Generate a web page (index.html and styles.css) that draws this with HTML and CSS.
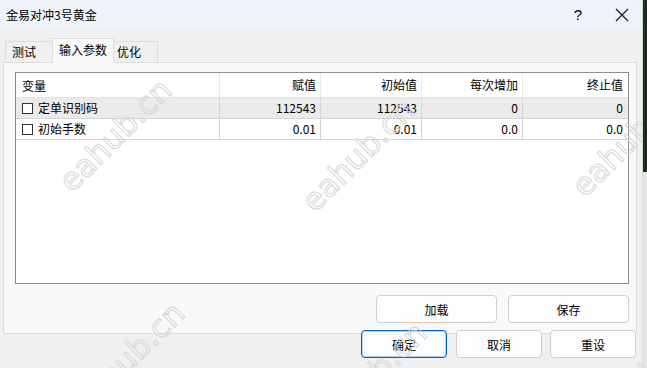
FILE: index.html
```html
<!DOCTYPE html>
<html lang="zh-CN">
<head>
    <meta charset="UTF-8">
    <title>金易对冲3号黄金</title>
    <link rel="stylesheet" href="styles.css">
</head>
<body>
    <div class="window">
        <div class="title-bar">
            <span class="title">金易对冲3号黄金</span>
            <span class="title-help">?</span>
            <span class="title-close">
                <svg width="14" height="14" viewBox="0 0 14 14"><path d="M1 1 L13 13 M13 1 L1 13" stroke="#1a1a1a" stroke-width="1.2" fill="none"/></svg>
            </span>
        </div>

        <div class="tabs">
            <div class="tab tab-test">测试</div>
            <div class="tab tab-active">输入参数</div>
            <div class="tab tab-opt">优化</div>
        </div>

        <div class="panel">
            <div class="list-view">
                <div class="list-row list-head">
                    <div class="cell cell-name">变量</div>
                    <div class="cell">赋值</div>
                    <div class="cell">初始值</div>
                    <div class="cell">每次增加</div>
                    <div class="cell cell-last">终止值</div>
                </div>
                <div class="list-row list-item selected">
                    <div class="cell cell-name"><span class="check"></span>定单识别码</div>
                    <div class="cell">112543</div>
                    <div class="cell">112543</div>
                    <div class="cell">0</div>
                    <div class="cell cell-last">0</div>
                </div>
                <div class="list-row list-item">
                    <div class="cell cell-name"><span class="check"></span>初始手数</div>
                    <div class="cell">0.01</div>
                    <div class="cell">0.01</div>
                    <div class="cell">0.0</div>
                    <div class="cell cell-last">0.0</div>
                </div>
            </div>
            <div class="panel-buttons">
                <button class="btn btn-wide">加载</button>
                <button class="btn btn-wide">保存</button>
            </div>
        </div>

        <div class="dialog-buttons">
            <button class="btn btn-default">确定</button>
            <button class="btn">取消</button>
            <button class="btn">重设</button>
        </div>

        <span class="wm" style="left:115px;top:135px">eahub.cn</span>
        <span class="wm" style="left:358px;top:155px">eahub.cn</span>
        <span class="wm" style="left:628px;top:140px">eahub.cn</span>
        <span class="wm" style="left:128px;top:358px">eahub.cn</span>
        <span class="wm" style="left:370px;top:378px">eahub.cn</span>
        <span class="wm" style="left:640px;top:380px">eahub.cn</span>
    </div>
    <div class="desktop"></div>
</body>
</html>
```

FILE: styles.css
```css
body {
    margin: 0;
    width: 647px;
    height: 368px;
    overflow: hidden;
    display: flex;
    font-family: "Noto Sans CJK SC", "Noto Sans", sans-serif;
    font-size: 12px;
    color: #000;
    background-color: #f0f0f0;
}
.window {
    position: relative;
    width: 642px;
    height: 368px;
    background-color: #f0f0f0;
    border-top-right-radius: 8px;
    overflow: hidden;
}
.desktop {
    flex: 1;
    background: linear-gradient(to bottom, #1e2a1e 0, #1e2a1e 172px, #e4e4e4 172px, #e4e4e4 100%);
    border-left: 1px solid #d8d8d8;
}
.title-bar {
    height: 29px;
    background-color: #eef4f9;
    display: flex;
    align-items: center;
    padding-left: 6px;
}
.title {
    flex: 1;
    font-size: 12px;
    line-height: 16px;
}
.title-help {
    width: 20px;
    margin-right: 27px;
    font-family: "Liberation Sans", sans-serif;
    font-size: 15px;
    text-align: center;
}
.title-close {
    width: 14px;
    height: 14px;
    margin-right: 13px;
    display: flex;
}
.tabs {
    display: flex;
    align-items: flex-end;
    height: 33px;
    padding-left: 5px;
    position: relative;
    z-index: 1;
}
.tab {
    height: 21px;
    line-height: 20px;
    border: 1px solid #dcdcdc;
    border-bottom: none;
    background-color: #f0f0f0;
    box-sizing: border-box;
}
.tab-test {
    width: 47px;
    padding-left: 6px;
    border-right: none;
}
.tab-active {
    width: 62px;
    height: 25px;
    line-height: 22px;
    text-align: center;
    background-color: #f9f9f9;
    margin-bottom: -1px;
    height: 25px;
}
.tab-opt {
    width: 44px;
    padding-left: 3px;
    border-left: none;
}
.panel {
    margin: 0 5px 0 3px;
    height: 272px;
    border: 1px solid #dcdcdc;
    background-color: #f9f9f9;
    padding: 9px 7px 0 11px;
    box-sizing: border-box;
}
.list-view {
    height: 212px;
    border: 1px solid #8c8c96;
    background-color: #fff;
    box-sizing: border-box;
}
.list-row {
    display: flex;
    height: 21px;
    border-bottom: 1px solid #d4d4d4;
    box-sizing: border-box;
}
.list-head {
    height: 25px;
    border-bottom-color: #e2e2e2;
}
.list-item.selected {
    background-color: #ebebeb;
}
.cell {
    width: 101px;
    border-right: 1px solid #d4d4d4;
    text-align: right;
    padding-right: 4px;
    box-sizing: border-box;
    line-height: 20px;
    white-space: nowrap;
}
.list-head .cell {
    border-right-color: #e8e8e8;
    line-height: 23px;
}
.cell-name {
    width: 204px;
    text-align: left;
    padding-left: 6px;
    display: flex;
    align-items: center;
}
.list-head .cell-name {
    padding-left: 6px;
}
.cell-last {
    flex: 1;
    border-right: none;
    padding-right: 5px;
}
.check {
    width: 11px;
    height: 11px;
    border: 1px solid #333;
    box-sizing: border-box;
    background-color: #fff;
    margin-right: 5px;
    flex-shrink: 0;
}
.panel-buttons {
    display: flex;
    justify-content: flex-end;
    gap: 11px;
    margin-top: 11px;
}
.dialog-buttons {
    display: flex;
    justify-content: flex-end;
    gap: 8px;
    margin-top: -4px;
    padding-right: 6px;
    position: relative;
}
.btn {
    width: 86px;
    height: 28px;
    border: 1px solid #d0d0d0;
    border-radius: 4px;
    background-color: #fdfdfd;
    font-family: "Noto Sans CJK SC", "Noto Sans", sans-serif;
    font-size: 12px;
    color: #000;
    padding: 0;
}
.btn-wide {
    width: 121px;
}
.btn-default {
    border-color: #0067c0;
    box-shadow: inset 0 0 0 1px rgba(0, 103, 192, 0.3);
    margin-right: 1px;
}
.wm {
    position: absolute;
    transform: translate(-50%, -50%) rotate(-45deg);
    font-family: "DejaVu Sans", sans-serif;
    font-size: 31px;
    color: transparent;
    -webkit-text-stroke: 1px #d6d6d6;
    white-space: nowrap;
    pointer-events: none;
    z-index: 2;
}
```
